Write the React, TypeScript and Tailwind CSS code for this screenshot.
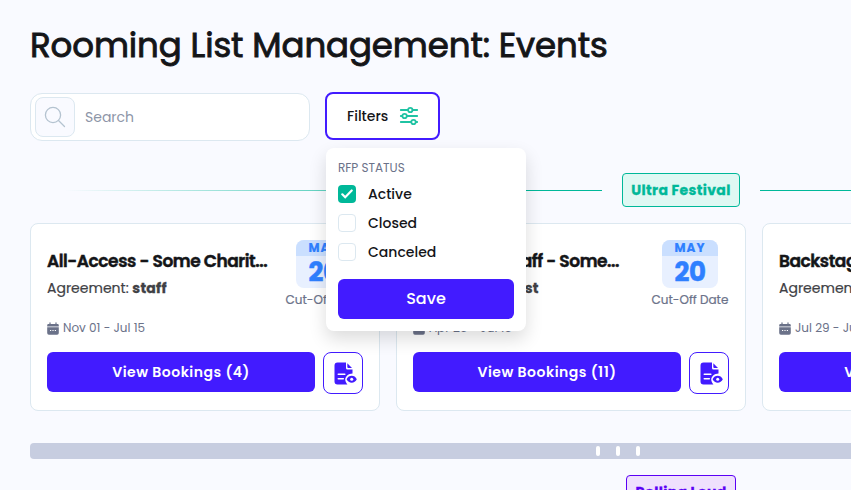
import React from "react";

function SearchIcon() {
  return (
    <svg width="22" height="22" viewBox="0 0 22 22" fill="none" stroke="#b4c3d0" strokeWidth="1.3" strokeLinecap="round">
      <circle cx="9" cy="9" r="7.6" />
      <path d="M14.5 14.5 20.5 20.5" />
    </svg>
  );
}

function SlidersIcon() {
  return (
    <svg width="20" height="20" viewBox="0 0 20 20" fill="none" stroke="#1fc3a3" strokeWidth="1.8" strokeLinecap="round">
      <path d="M1.8 4H8.5M13.5 4H18.2M1.8 10H3.2M8 10H18.2M1.8 16H12M17 16H18.2" />
      <circle cx="11.3" cy="4" r="2.2" />
      <circle cx="5.6" cy="10" r="2.2" />
      <circle cx="14.5" cy="16" r="2.2" />
    </svg>
  );
}

function CalendarIcon() {
  return (
    <svg width="12" height="13" viewBox="0 0 12 13" fill="#6b7289">
      <path d="M2.4.8a.6.6 0 0 1 1.2 0V2h4.8V.8a.6.6 0 0 1 1.2 0V2H10.6a1.2 1.2 0 0 1 1.2 1.2V4.5H.2V3.2A1.2 1.2 0 0 1 1.4 2h1z" />
      <path d="M.2 5.3h11.6V11a1.7 1.7 0 0 1-1.7 1.7H1.9A1.7 1.7 0 0 1 .2 11z" />
      <path d="M3 8.5h1.2M5.4 8.5h1.2M7.8 8.5H9" stroke="#fff" strokeWidth="1.1" />
    </svg>
  );
}

function DocumentEyeIcon() {
  return (
    <svg width="23" height="23" viewBox="0 0 23 23">
      <path d="M3.5.5H12v5.5a1.5 1.5 0 0 0 1.5 1.5H18.5V11.5C14.5 11.6 11.5 14.3 11.2 17.3c.1 2 .9 3.7 2.2 5.2H3.5A3 3 0 0 1 .5 19.5V3.5A3 3 0 0 1 3.5.5Z" fill="#421bff" />
      <path d="M13.3 1.2 18 5.9h-3.7a1 1 0 0 1-1-1Z" fill="#421bff" />
      <path d="M4.3 12.2h6.5M4.3 16.8h5" stroke="#fff" strokeWidth="1.6" strokeLinecap="round" />
      <path d="M12.6 17.3c2-4.6 8.2-4.6 10.2 0-2 4.6-8.2 4.6-10.2 0Z" fill="#421bff" />
      <circle cx="17.7" cy="17.3" r="1.5" fill="#fff" />
    </svg>
  );
}

type Option = { label: string; checked: boolean };

const options: Option[] = [
  { label: "Active", checked: true },
  { label: "Closed", checked: false },
  { label: "Canceled", checked: false },
];

function FilterMenu() {
  return (
    <div className="absolute left-px top-14 z-10 h-[183px] w-[200px] rounded-lg bg-white px-3 pt-3 shadow-[0_8px_18px_rgba(0,0,0,0.14)]">
      <p className="h-4 text-[12px] leading-4 text-[#6b7289]">RFP STATUS</p>
      <div className="mt-[9px] flex flex-col gap-[11px]">
        {options.map((o) => (
          <div key={o.label} className="flex h-[18px] items-center gap-3">
            <span
              className={
                o.checked
                  ? "flex size-[18px] items-center justify-center rounded bg-[#00b899]"
                  : "flex size-[18px] rounded border border-[#dce8f0] bg-white"
              }
            >
              {o.checked && (
                <svg width="12" height="10" viewBox="0 0 12 10" fill="none" stroke="#fff" strokeWidth="2.2" strokeLinecap="round">
                  <path d="M1.3 5.3 4.2 8.2 10.7 1.5" />
                </svg>
              )}
            </span>
            <span className="text-[14px] leading-[18px] font-medium text-[#141518]">{o.label}</span>
          </div>
        ))}
      </div>
      <button className="mt-[18px] h-10 w-full rounded-md bg-[#421bff] text-[16px] font-medium text-white">Save</button>
    </div>
  );
}

type Event = { title: string; agreement: string; dates: string; count: number };

const events: Event[] = [
  { title: "All-Access - Some Charit...", agreement: "staff", dates: "Nov 01 - Jul 15", count: 4 },
  { title: "Backstage Staff - Some...", agreement: "artist", dates: "Apr 25 - Jul 15", count: 11 },
  { title: "Backstage - Some Crew...", agreement: "staff", dates: "Jul 29 - Jul 31", count: 6 },
];

function EventCard({ event }: { event: Event }) {
  return (
    <article className="h-[188px] w-[350px] shrink-0 rounded-lg border border-[#dce8f0] bg-white p-4">
      <div className="flex h-[68px] justify-between">
        <div className="w-[222px] whitespace-nowrap pt-[9px]">
          <h2 className="text-[17px] leading-6 font-semibold tracking-[-0.44px] text-[#141518] [-webkit-text-stroke:0.5px_#141518]">
            {event.title}
          </h2>
          <p className="mt-[3px] text-[14px] leading-6 text-[#404145] [-webkit-text-stroke:0.2px_#404145]">
            Agreement: <b className="tracking-[0.25px] [-webkit-text-stroke:0.3px_#404145]">{event.agreement}</b>
          </p>
        </div>
        <div className="flex w-[78px] flex-col items-center">
          <div className="h-12 w-14 overflow-hidden rounded-lg bg-[#e8f0ff] text-center font-bold text-[#2f80ff]">
            <div className="h-4 bg-[#cadfff] text-[12px] leading-4 tracking-[1px] [-webkit-text-stroke:0.2px_#2f80ff]">MAY</div>
            <div className="text-[26px] leading-8 tracking-[-0.3px] [-webkit-text-stroke:0.5px_#2f80ff]">20</div>
          </div>
          <p className="mt-1 whitespace-nowrap text-[12px] leading-4 text-[#6b7289] [-webkit-text-stroke:0.2px_#6b7289]">
            Cut-Off Date
          </p>
        </div>
      </div>
      <div className="mt-3 flex h-4 items-center gap-1">
        <CalendarIcon />
        <span className="text-[12px] leading-4 text-[#6b7289]">{event.dates}</span>
      </div>
      <div className="mt-4 flex gap-2">
        <button className="h-10 w-[268px] rounded-md bg-[#421bff] text-[14px] font-semibold tracking-[0.5px] text-white">
          View Bookings ({event.count})
        </button>
        <button className="flex h-[42px] w-10 items-center justify-center rounded-lg border border-[#421bff] bg-white pl-1">
          <DocumentEyeIcon />
        </button>
      </div>
    </article>
  );
}

export default function App() {
  return (
    <div className="h-[490px] w-full overflow-hidden bg-[#f9faff] pl-[30px] font-['Poppins','Inter','Liberation_Sans',sans-serif]">
      <h1 className="whitespace-nowrap pt-[21px] text-[34px] leading-[48px] tracking-[-0.1px] text-[#141518] [-webkit-text-stroke:0.9px_#141518]">
        Rooming List Management: Events
      </h1>
      <div className="mt-[23px] flex gap-[15px]">
        <div className="mt-px flex h-12 w-[280px] items-center gap-2.5 rounded-xl border border-[#dce8f0] bg-white pl-1">
          <span className="flex size-10 items-center justify-center rounded-lg border border-[#dce8f0] bg-[#f9faff]">
            <SearchIcon />
          </span>
          <span className="text-[14px] text-[#8d95a7]">Search</span>
        </div>
        <div className="relative">
          <button className="flex h-12 w-[115px] items-center rounded-lg border-2 border-[#421bff] bg-white pl-5 text-[14px] font-medium text-[#141518]">
            <span className="w-[52px] text-left">Filters</span>
            <SlidersIcon />
          </button>
          <FilterMenu />
        </div>
      </div>
      <section className="mt-8 w-[1302px]">
        <div className="flex items-center gap-5">
          <div className="h-px flex-1 bg-linear-to-r from-transparent from-6% to-[#00b899] to-80%" />
          <div className="h-[34px] w-[118px] whitespace-nowrap rounded border border-[#00b899] bg-[#dff8f3] text-center text-[14px] leading-8 font-bold tracking-[0.35px] text-[#00b899] [-webkit-text-stroke:0.3px_#00b899]">
            Ultra Festival
          </div>
          <div className="h-px flex-1 bg-linear-to-l from-transparent from-6% to-[#00b899] to-80%" />
        </div>
        <div className="mt-4 flex gap-4">
          {events.map((e) => (
            <EventCard key={e.title} event={e} />
          ))}
        </div>
      </section>
      <div className="mt-8 flex h-4 w-[1302px] items-center gap-4 rounded-sm bg-[#c7cde0] pl-[566px]">
        <span className="h-2.5 w-1 rounded-sm bg-white" />
        <span className="h-2.5 w-1 rounded-sm bg-white" />
        <span className="h-2.5 w-1 rounded-sm bg-white" />
      </div>
      <div className="mt-4 flex w-[1302px] justify-center">
        <div className="h-[34px] w-[110px] whitespace-nowrap rounded border border-[#5b00f5] bg-[#efe0fd] text-center text-[14px] leading-8 font-bold tracking-[0.35px] text-[#5b00f5] [-webkit-text-stroke:0.3px_#5b00f5]">
          Rolling Loud
        </div>
      </div>
    </div>
  );
}
